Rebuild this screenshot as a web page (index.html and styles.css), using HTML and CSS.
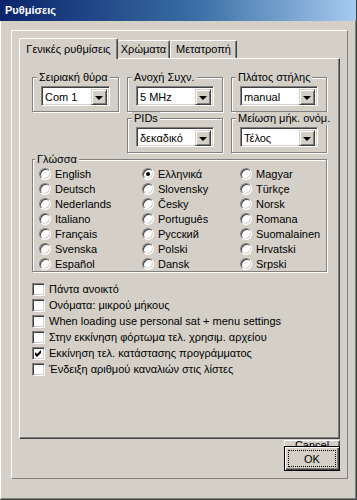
FILE: index.html
```html
<!DOCTYPE html>
<html lang="el">
<head>
    <meta charset="UTF-8">
    <title>Ρυθμίσεις</title>
    <link rel="stylesheet" href="styles.css">
</head>
<body>
    <div class="window">
        <div class="title-bar">Ρυθμίσεις</div>

        <div class="frame">
            <div class="tabs">
                <div class="tab tab-active">Γενικές ρυθμίσεις</div>
                <div class="tab tab-colors">Χρώματα</div>
                <div class="tab tab-convert">Μετατροπή</div>
            </div>

            <div class="tab-panel">
                <div class="settings-grid">
                    <fieldset class="group">
                        <legend>Σειριακή θύρα</legend>
                        <div class="combo"><span class="combo-value">Com 1</span><span class="combo-button"></span></div>
                    </fieldset>
                    <fieldset class="group">
                        <legend>Ανοχή Συχν.</legend>
                        <div class="combo"><span class="combo-value">5 MHz</span><span class="combo-button"></span></div>
                    </fieldset>
                    <fieldset class="group">
                        <legend>Πλάτος στήλης</legend>
                        <div class="combo"><span class="combo-value">manual</span><span class="combo-button"></span></div>
                    </fieldset>
                    <fieldset class="group group-pids">
                        <legend>PIDs</legend>
                        <div class="combo"><span class="combo-value">δεκαδικό</span><span class="combo-button"></span></div>
                    </fieldset>
                    <fieldset class="group">
                        <legend>Μείωση μήκ. ονόμ.</legend>
                        <div class="combo"><span class="combo-value">Τέλος</span><span class="combo-button"></span></div>
                    </fieldset>
                </div>

                <fieldset class="group languages">
                    <legend>Γλώσσα</legend>
                    <div class="radio-grid">
                        <label class="radio-item"><span class="radio"></span>English</label>
                        <label class="radio-item"><span class="radio"></span>Deutsch</label>
                        <label class="radio-item"><span class="radio"></span>Nederlands</label>
                        <label class="radio-item"><span class="radio"></span>Italiano</label>
                        <label class="radio-item"><span class="radio"></span>Français</label>
                        <label class="radio-item"><span class="radio"></span>Svenska</label>
                        <label class="radio-item"><span class="radio"></span>Español</label>
                        <label class="radio-item"><span class="radio checked"></span>Ελληνικά</label>
                        <label class="radio-item"><span class="radio"></span>Slovensky</label>
                        <label class="radio-item"><span class="radio"></span>Česky</label>
                        <label class="radio-item"><span class="radio"></span>Português</label>
                        <label class="radio-item"><span class="radio"></span>Русский</label>
                        <label class="radio-item"><span class="radio"></span>Polski</label>
                        <label class="radio-item"><span class="radio"></span>Dansk</label>
                        <label class="radio-item"><span class="radio"></span>Magyar</label>
                        <label class="radio-item"><span class="radio"></span>Türkçe</label>
                        <label class="radio-item"><span class="radio"></span>Norsk</label>
                        <label class="radio-item"><span class="radio"></span>Romana</label>
                        <label class="radio-item"><span class="radio"></span>Suomalainen</label>
                        <label class="radio-item"><span class="radio"></span>Hrvatski</label>
                        <label class="radio-item"><span class="radio"></span>Srpski</label>
                    </div>
                </fieldset>

                <div class="options">
                    <label class="check-item"><span class="checkbox"></span>Πάντα ανοικτό</label>
                    <label class="check-item"><span class="checkbox"></span>Ονόματα: μικρού μήκους</label>
                    <label class="check-item"><span class="checkbox"></span>When loading use personal sat + menu settings</label>
                    <label class="check-item"><span class="checkbox"></span>Στην εκκίνηση φόρτωμα τελ. χρησιμ. αρχείου</label>
                    <label class="check-item"><span class="checkbox"><svg width="9" height="9" viewBox="0 0 9 9"><path d="M1 3 L3 5 L7 1 L7 4 L3 8 L1 6 Z" fill="#000"/></svg></span>Εκκίνηση τελ. κατάστασης προγράμματος</label>
                    <label class="check-item"><span class="checkbox"></span>Ένδειξη αριθμού καναλιών στις λίστες</label>
                </div>
            </div>

            <div class="buttons">
                <button class="btn">Cancel</button>
                <button class="btn btn-default"><span class="focus">OK</span></button>
            </div>
        </div>
    </div>
</body>
</html>
```

FILE: styles.css
```css
:root {
    --face: #D4D0C8;
    --light: #FFFFFF;
    --shadow: #808080;
    --dark: #404040;
}

* {
    margin: 0;
    padding: 0;
    box-sizing: border-box;
}

body {
    background-color: var(--face);
    font-family: "Liberation Sans", Arial, sans-serif;
    font-size: 11px;
    color: #000;
}

.window {
    width: 357px;
    height: 500px;
    background-color: var(--face);
    border-right: 1px solid var(--dark);
    border-bottom: 1px solid var(--dark);
    box-shadow: inset 1px 0 0 var(--light), inset -1px -1px 0 var(--shadow);
}

/* Title bar */
.title-bar {
    height: 21px;
    padding: 3px 0 0 5px;
    background: linear-gradient(to right, #0A246A, #3A6EA5 55%, #A6CAF0);
    color: #fff;
    font-weight: bold;
    font-size: 11px;
    line-height: 14px;
}

.frame {
    width: 337px;
    height: 449px;
    margin: 9px 0 0 11px;
    padding: 7px 7px 0 7px;
    border-top: 1px solid var(--light);
    border-left: 1px solid var(--light);
    border-right: 1px solid var(--shadow);
    border-bottom: 1px solid var(--shadow);
}

/* Tabs */
.tabs {
    display: flex;
    height: 20px;
    align-items: flex-start;
    position: relative;
    z-index: 1;
}

.tab {
    height: 18px;
    margin-top: 2px;
    text-align: center;
    line-height: 16px;
    background-color: var(--face);
    border-top: 1px solid var(--light);
    border-left: 1px solid var(--light);
    border-right: 1px solid var(--dark);
    border-radius: 2px 2px 0 0;
    box-shadow: inset -1px 0 0 var(--shadow);
}

.tab-active {
    width: 99px;
    height: 21px;
    margin-top: 0;
    line-height: 20px;
}

.tab-colors {
    width: 52px;
    border-left: none;
}

.tab-convert {
    width: 67px;
}

.tab-panel {
    height: 381px;
    padding: 12px 0 0 12px;
    border-top: 1px solid var(--light);
    border-left: 1px solid var(--light);
    border-right: 1px solid var(--dark);
    border-bottom: 1px solid var(--dark);
    box-shadow: inset -1px -1px 0 var(--shadow);
}

/* Group boxes */
.group {
    border: 1px solid var(--shadow);
    box-shadow: inset 1px 1px 0 var(--light), 1px 1px 0 var(--light);
    padding: 2px 8px 5px 8px;
    min-width: 0;
}

.group legend {
    margin-left: -4px;
    padding: 0 2px;
    line-height: 13px;
    white-space: nowrap;
    background-color: var(--face);
}

.settings-grid {
    display: grid;
    grid-template-columns: 87px 96px 96px;
    column-gap: 8px;
    width: 295px;
}

.group-pids {
    grid-column: 2;
}

/* Combo box */
.combo {
    display: flex;
    height: 20px;
    padding: 2px;
    background-color: #fff;
    border: 1px solid;
    border-color: var(--shadow) var(--light) var(--light) var(--shadow);
    box-shadow: inset 1px 1px 0 var(--dark), inset -1px -1px 0 var(--face);
}

.combo-value {
    flex: 1;
    padding-left: 1px;
    line-height: 16px;
    white-space: nowrap;
    overflow: hidden;
}

.combo-button {
    width: 16px;
    height: 16px;
    display: flex;
    align-items: center;
    justify-content: center;
    background-color: var(--face);
    border: 1px solid;
    border-color: var(--face) var(--dark) var(--dark) var(--face);
    box-shadow: inset 1px 1px 0 var(--light), inset -1px -1px 0 var(--shadow);
}

.combo-button::after {
    content: "";
    border-left: 4px solid transparent;
    border-right: 4px solid transparent;
    border-top: 4px solid #000;
    margin-top: 1px;
}

/* Languages */
.languages {
    width: 295px;
    margin-top: 0;
    padding: 0 0 0 6px;
}

.radio-grid {
    display: grid;
    grid-auto-flow: column;
    grid-template-rows: repeat(7, 15px);
    grid-template-columns: 103px 98px auto;
}

.radio-item {
    display: flex;
    align-items: center;
    gap: 4px;
    white-space: nowrap;
}

.radio {
    width: 12px;
    height: 12px;
    border-radius: 50%;
    background-color: #fff;
    border: 1px solid;
    border-color: var(--shadow) var(--light) var(--light) var(--shadow);
    box-shadow: inset 1px 1px 0 var(--dark), inset -1px -1px 0 var(--face);
    display: flex;
    align-items: center;
    justify-content: center;
    flex-shrink: 0;
}

.radio.checked::after {
    content: "";
    width: 4px;
    height: 4px;
    border-radius: 50%;
    background-color: #000;
}

/* Checkboxes */
.options {
    margin-top: 9px;
}

.check-item {
    display: flex;
    align-items: center;
    gap: 4px;
    height: 16px;
    white-space: nowrap;
}

.checkbox {
    width: 13px;
    height: 13px;
    padding: 1px;
    background-color: #fff;
    border: 1px solid;
    border-color: var(--shadow) var(--light) var(--light) var(--shadow);
    box-shadow: inset 1px 1px 0 var(--dark), inset -1px -1px 0 var(--face);
    flex-shrink: 0;
}

.checkbox svg {
    display: block;
}

/* Buttons */
.buttons {
    position: relative;
    display: flex;
    justify-content: flex-end;
    margin-top: 1px;
}

.btn {
    width: 56px;
    height: 25px;
    font-family: inherit;
    font-size: 11px;
    background-color: var(--face);
    border: 1px solid;
    border-color: var(--light) var(--dark) var(--dark) var(--light);
    box-shadow: inset -1px -1px 0 var(--shadow);
    line-height: 9px;
    padding-bottom: 14px;
}

.btn-default {
    position: absolute;
    top: 6px;
    right: 0;
    border: 1px solid #000;
    box-shadow: inset 1px 1px 0 var(--light), inset -1px -1px 0 var(--dark), inset -2px -2px 0 var(--shadow);
    padding: 3px;
    line-height: normal;
}

.focus {
    display: flex;
    align-items: center;
    justify-content: center;
    height: 100%;
    border: 1px dotted #000;
}
```
